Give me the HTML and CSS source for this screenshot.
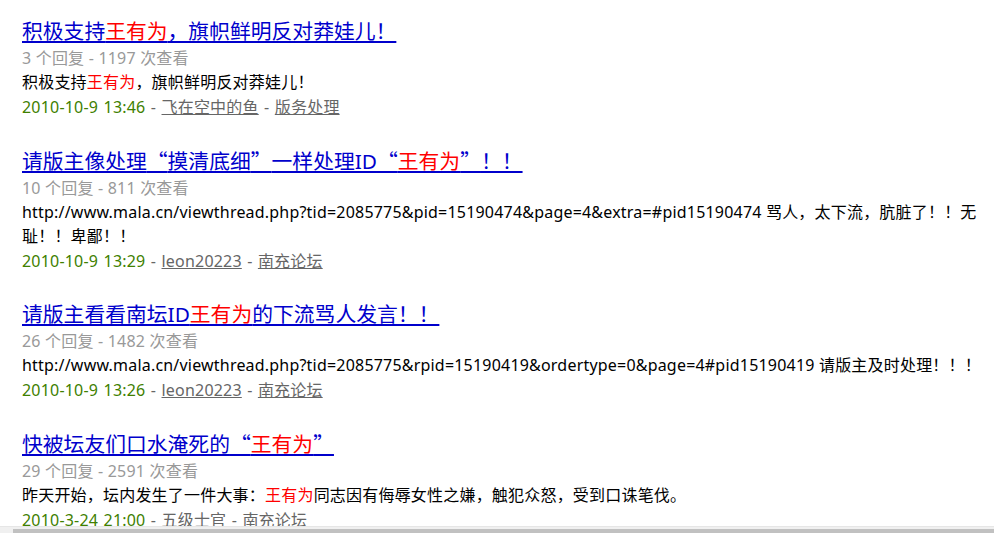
FILE: index.html
```html
<!DOCTYPE html>
<html lang="zh-CN">
<head>
<meta charset="utf-8">
<title>搜索结果</title>
<link rel="stylesheet" href="styles.css">
</head>
<body>
<div class="results">
  <div class="item">
    <div class="title"><a href="#">积极支持<em>王有为</em>，旗帜鲜明反对莽娃儿！</a></div>
    <div class="meta">3 个回复 - 1197 次查看</div>
    <div class="body">积极支持<em>王有为</em>，旗帜鲜明反对莽娃儿！</div>
    <div class="info"><span class="date">2010-10-9 13:46</span> - <a href="#">飞在空中的鱼</a> - <a href="#">版务处理</a></div>
  </div>
  <div class="item">
    <div class="title"><a href="#">请版主像处理<span class="q">“</span>摸清底细<span class="q">”</span>一样处理ID<span class="q">“</span><em>王有为</em><span class="q">”</span>！！</a></div>
    <div class="meta">10 个回复 - 811 次查看</div>
    <div class="body">http://www.mala.cn/viewthread.php?tid=2085775&amp;pid=15190474&amp;page=4&amp;extra=#pid15190474 骂人，太下流，肮脏了！！无耻！！卑鄙！！</div>
    <div class="info"><span class="date">2010-10-9 13:29</span> - <a href="#">leon20223</a> - <a href="#">南充论坛</a></div>
  </div>
  <div class="item">
    <div class="title"><a href="#">请版主看看南坛ID<em>王有为</em>的下流骂人发言！！</a></div>
    <div class="meta">26 个回复 - 1482 次查看</div>
    <div class="body">http://www.mala.cn/viewthread.php?tid=2085775&amp;rpid=15190419&amp;ordertype=0&amp;page=4#pid15190419 请版主及时处理！！！</div>
    <div class="info"><span class="date">2010-10-9 13:26</span> - <a href="#">leon20223</a> - <a href="#">南充论坛</a></div>
  </div>
  <div class="item">
    <div class="title"><a href="#">快被坛友们口水淹死的<span class="q">“</span><em>王有为</em><span class="q">”</span></a></div>
    <div class="meta">29 个回复 - 2591 次查看</div>
    <div class="body">昨天开始，坛内发生了一件大事：<em>王有为</em>同志因有侮辱女性之嫌，触犯众怒，受到口诛笔伐。</div>
    <div class="info"><span class="date">2010-3-24 21:00</span> - <a href="#">五级士官</a> - <a href="#">南充论坛</a></div>
  </div>
</div>
<div class="hscroll"><span class="arrow"></span><span class="thumb"></span></div>
</body>
</html>
```

FILE: styles.css
```css
html, body {
  margin: 0;
  padding: 0;
  background: #fff;
}
body {
  font-family: "Noto Sans", "Noto Sans CJK SC", sans-serif;
  font-size: 16px;
  color: #000;
}
.results {
  padding: 17px 0 0 22px;
  width: 970px;
}
.item {
  margin-bottom: 27px;
}
.title {
  font-size: 20.8px;
  line-height: 28px;
}
.title a {
  color: #0000cc;
  text-decoration: underline;
}
em {
  font-style: normal;
  color: #ff0000;
}
.q {
  font-family: "Noto Sans CJK SC", sans-serif;
}
.meta {
  line-height: 24px;
  padding-top: 1px;
  color: #999;
  letter-spacing: 0.2px;
}
.body {
  line-height: 24px;
  letter-spacing: 0.2px;
}
.info {
  line-height: 24px;
  padding-top: 1px;
  color: #666;
  letter-spacing: 0.2px;
  word-spacing: 1px;
}
.date {
  color: #408000;
}
.info a {
  color: #666;
  text-decoration: underline;
}
.hscroll {
  position: fixed;
  left: 0;
  right: 0;
  bottom: 0;
  height: 7px;
  background: #f0f0f0;
  border-top: 1px solid #e6e6e6;
  display: flex;
  box-sizing: border-box;
}
.hscroll .arrow {
  width: 13px;
  flex: none;
}
.hscroll .thumb {
  flex: 1;
  margin-top: 2px;
  background: #c1c1c1;
}
```
